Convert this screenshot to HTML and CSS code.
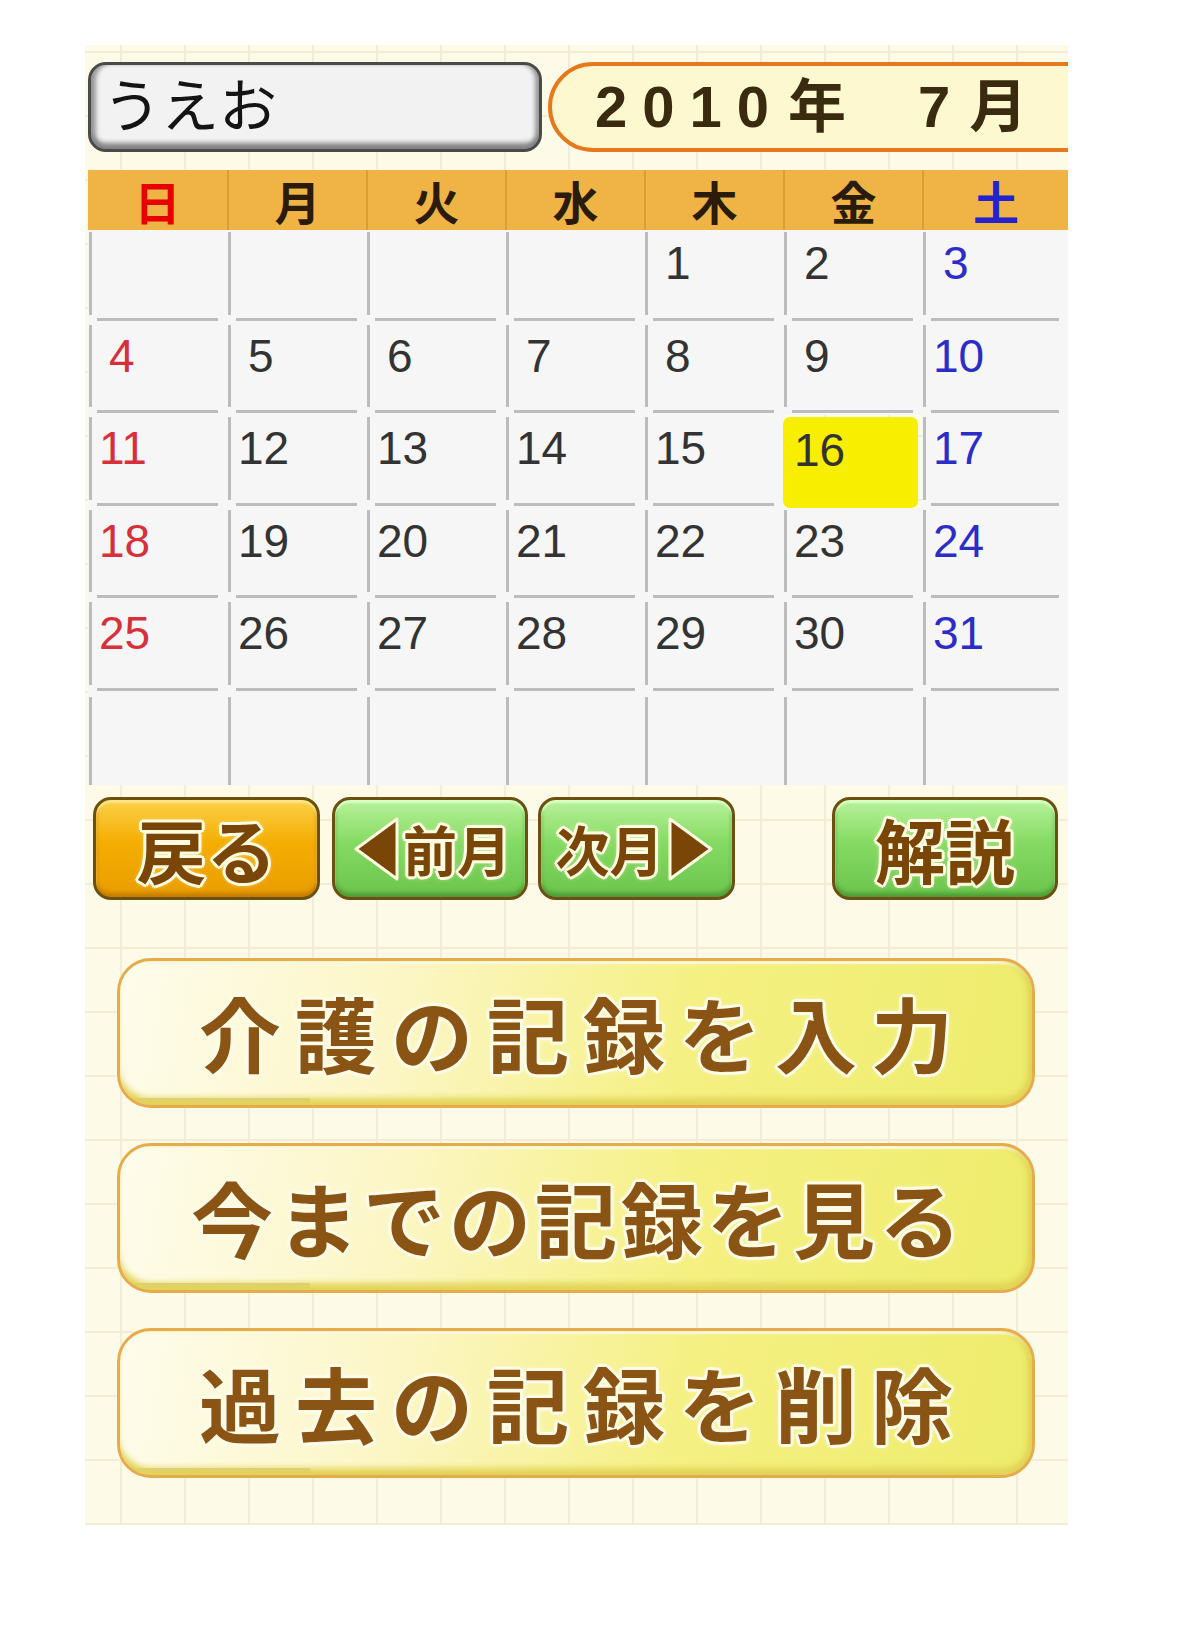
FILE: index.html
```html
<!DOCTYPE html>
<html lang="ja">
<head>
    <meta charset="UTF-8">
    <meta name="viewport" content="width=device-width, initial-scale=1.0">
    <title>介護の記録 カレンダー</title>
    <link rel="stylesheet" href="styles.css">
</head>
<body>

<div class="screen">
    <div class="top-bar">
        <div class="name-box">うえお</div>
        <div class="date-box">2010<span class="unit">年</span><span class="month">7</span><span class="unit">月</span></div>
    </div>

    <div class="calendar">
        <div class="head sun">日</div>
        <div class="head">月</div>
        <div class="head">火</div>
        <div class="head">水</div>
        <div class="head">木</div>
        <div class="head">金</div>
        <div class="head sat">土</div>

        <div class="cell"></div>
        <div class="cell"></div>
        <div class="cell"></div>
        <div class="cell"></div>
        <div class="cell d1">1</div>
        <div class="cell d1">2</div>
        <div class="cell d1 sat">3</div>

        <div class="cell d1 sun">4</div>
        <div class="cell d1">5</div>
        <div class="cell d1">6</div>
        <div class="cell d1">7</div>
        <div class="cell d1">8</div>
        <div class="cell d1">9</div>
        <div class="cell sat">10</div>

        <div class="cell sun">11</div>
        <div class="cell">12</div>
        <div class="cell">13</div>
        <div class="cell">14</div>
        <div class="cell">15</div>
        <div class="cell today">16</div>
        <div class="cell sat">17</div>

        <div class="cell sun">18</div>
        <div class="cell">19</div>
        <div class="cell">20</div>
        <div class="cell">21</div>
        <div class="cell">22</div>
        <div class="cell">23</div>
        <div class="cell sat">24</div>

        <div class="cell sun">25</div>
        <div class="cell">26</div>
        <div class="cell">27</div>
        <div class="cell">28</div>
        <div class="cell">29</div>
        <div class="cell">30</div>
        <div class="cell sat">31</div>

        <div class="cell last"></div>
        <div class="cell last"></div>
        <div class="cell last"></div>
        <div class="cell last"></div>
        <div class="cell last"></div>
        <div class="cell last"></div>
        <div class="cell last"></div>
    </div>

    <div class="nav">
        <div class="btn btn-orange btn-back">戻る</div>
        <div class="btn btn-green btn-prev">
            <svg class="arrow" width="48" height="66" viewBox="0 0 48 66"><polygon points="45,3 45,63 4,33" fill="#7a4608" stroke="#fffbe0" stroke-width="3" stroke-linejoin="round"/></svg>
            <span>前月</span>
        </div>
        <div class="btn btn-green btn-next">
            <span>次月</span>
            <svg class="arrow" width="48" height="66" viewBox="0 0 48 66"><polygon points="3,3 3,63 44,33" fill="#7a4608" stroke="#fffbe0" stroke-width="3" stroke-linejoin="round"/></svg>
        </div>
        <div class="btn btn-green btn-help">解説</div>
    </div>

    <div class="menu">
        <div class="menu-btn wide">介護の記録を入力</div>
        <div class="menu-btn">今までの記録を見る</div>
        <div class="menu-btn wide">過去の記録を削除</div>
    </div>
</div>

</body>
</html>
```

FILE: styles.css
```css
body {
    margin: 0;
    background-color: #fff;
    font-family: "Noto Sans CJK JP", sans-serif;
}

.screen {
    width: 983px;
    height: 1480px;
    margin: 45px 0 0 85px;
    overflow: hidden;
    background-color: #fdfbe7;
    background-image:
        linear-gradient(90deg, #f2edd4 2px, transparent 2px),
        linear-gradient(#f2edd4 2px, transparent 2px);
    background-size: 64px 64px;
    background-position: 35px 6px;
}

/* name + month */

.top-bar {
    display: flex;
    padding: 17px 0 0 3px;
    height: 90px;
}

.name-box {
    flex: none;
    width: 454px;
    height: 90px;
    box-sizing: border-box;
    border: 3px solid #4a4a4a;
    border-radius: 18px;
    background-color: #f2f2f2;
    box-shadow: inset 0 -9px 5px -3px #838383, inset 7px 0 4px -2px #999, inset -6px 0 4px -2px #999;
    padding-left: 12px;
    font-size: 58px;
    line-height: 74px;
    color: #141414;
}

.date-box {
    flex: none;
    width: 560px;
    height: 90px;
    margin-left: 6px;
    box-sizing: border-box;
    border: 4px solid #e8781e;
    border-radius: 46px 0 0 46px;
    background-color: #fdf8cf;
    padding-left: 43px;
    font-family: "Liberation Sans", "Noto Sans CJK JP", sans-serif;
    font-weight: bold;
    font-size: 58px;
    line-height: 82px;
    letter-spacing: 15px;
    color: #3a2b10;
}

.date-box .unit {
    margin-left: 4px;
    letter-spacing: 0;
}

.date-box .month {
    margin-left: 72px;
}

/* calendar */

.calendar {
    display: grid;
    grid-template-columns: repeat(6, 139px) 146px;
    margin: 18px 0 0 3px;
}

.head {
    height: 60px;
    background-color: #f0b446;
    border-left: 2px solid #d99e36;
    text-align: center;
    font-size: 46px;
    font-weight: bold;
    line-height: 60px;
    color: #2a1c08;
}

.head:first-child {
    border-left: none;
}

.head.sun {
    color: #e80000;
}

.head.sat {
    color: #2222d0;
}

.cell {
    height: 92.5px;
    box-sizing: border-box;
    padding: 10px 0 0 11px;
    background:
        linear-gradient(#bcbcbc, #bcbcbc) 1px 2px / 3px calc(100% - 10px) no-repeat,
        linear-gradient(#bcbcbc, #bcbcbc) 9px calc(100% - 2px) / calc(100% - 18px) 3px no-repeat,
        #f6f6f6;
    font-family: "Liberation Sans", Arial, sans-serif;
    font-size: 46px;
    line-height: 1;
    color: #333;
}

.cell.d1 {
    padding-left: 21px;
}

.cell.sun {
    color: #d8303a;
}

.cell.sat {
    color: #2c2cc8;
}

.cell.last {
    background:
        linear-gradient(#bcbcbc, #bcbcbc) 1px 4px / 3px 100% no-repeat,
        #f6f6f6;
}

.cell.today {
    background: #f8ee00;
    border-radius: 7px;
    margin: 2px 4px 0 0;
    height: 90.5px;
}

/* small buttons */

.nav {
    display: flex;
    height: 103px;
    margin-top: 12px;
    padding: 0 10px 0 8px;
}

.btn {
    display: flex;
    align-items: center;
    justify-content: center;
    box-sizing: border-box;
    height: 103px;
    border: 3px solid #6b5012;
    border-radius: 18px;
    font-weight: bold;
    color: #7a4608;
    text-shadow: 3px 0 #fffbe0, -3px 0 #fffbe0, 0 3px #fffbe0, 0 -3px #fffbe0,
        2px 2px #fffbe0, -2px -2px #fffbe0, 2px -2px #fffbe0, -2px 2px #fffbe0, 0 0 6px #fffbe0;
}

.btn-orange {
    background: linear-gradient(#fcd04a, #f4ad00 45%, #e99d00);
    box-shadow: inset 0 3px 2px #ffe58a, inset 0 -4px 4px #c47c00;
}

.btn-green {
    background: linear-gradient(#b8f29a, #84da62 45%, #6cc44c);
    box-shadow: inset 0 3px 2px #d8ffc4, inset 0 -4px 4px #4e9c34;
}

.btn-back {
    width: 227px;
    font-size: 70px;
}

.btn-prev {
    width: 196px;
    margin-left: 12px;
    font-size: 54px;
}

.btn-next {
    width: 197px;
    margin-left: 10px;
    font-size: 54px;
}

.btn-help {
    width: 226px;
    margin-left: auto;
    font-size: 70px;
}

.arrow {
    margin: 0 3px;
}

/* main menu */

.menu {
    display: flex;
    flex-direction: column;
    gap: 35px;
    margin: 58px 0 0 32px;
}

.menu-btn {
    width: 918px;
    height: 150px;
    box-sizing: border-box;
    border: 3px solid #e6ac4c;
    border-radius: 34px;
    background:
        linear-gradient(#d6c8a0, #d6c8a0) 0 100% / 190px 7px no-repeat,
        linear-gradient(100deg, #fefcec 0%, #fcf6c6 30%, #f5f082 62%, #eeec6c 100%);
    box-shadow: inset 0 -9px 6px -2px #e2d458, inset -6px 0 6px -2px #dcd050, inset 0 3px 2px #fffef2;
    text-align: center;
    padding-left: 4px;
    font-size: 82px;
    font-weight: bold;
    line-height: 142px;
    letter-spacing: 4px;
    color: #8a5414;
    text-shadow: 3px 0 #fffbe6, -3px 0 #fffbe6, 0 3px #fffbe6, 0 -3px #fffbe6,
        2px 2px #fffbe6, -2px -2px #fffbe6, 2px -2px #fffbe6, -2px 2px #fffbe6, 0 0 7px #fffbe6;
}

.menu-btn.wide {
    padding-left: 14px;
    letter-spacing: 14px;
}
```
